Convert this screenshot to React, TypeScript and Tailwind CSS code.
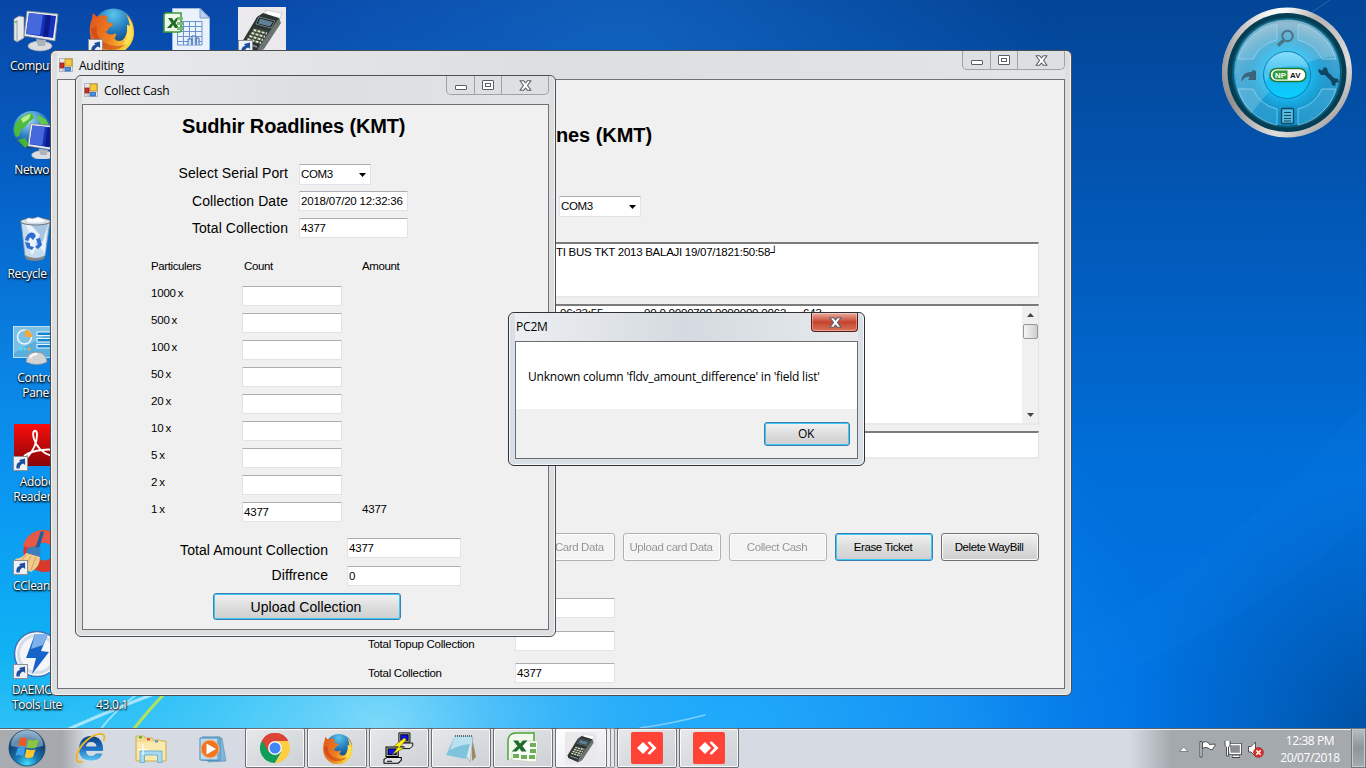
import React from "react";

const UI = "font-['Liberation_Sans',Arial,sans-serif] text-[11.5px] leading-[13px] tracking-[-0.4px] text-black whitespace-pre block";
const UI_WIDE = "font-['Liberation_Sans',Arial,sans-serif] text-[11.5px] leading-[13px] tracking-[-0.27px] text-black whitespace-pre block";
const NUM = "font-['Liberation_Sans',Arial,sans-serif] text-[11.5px] leading-[13px] tracking-[-0.2px] text-black whitespace-pre block";
const BIG = "font-['Liberation_Sans',Arial,sans-serif] text-[14px] leading-[16px] tracking-[0.07px] text-black whitespace-pre block";
const SEGOE = "font-['Open_Sans','Noto_Sans',sans-serif] whitespace-pre";

/* ---------- wallpaper ---------- */
function Wallpaper() {
  return (
    <svg className="absolute inset-0" width="1366" height="768" viewBox="0 0 1366 768">
      <defs>
        <linearGradient id="wBase" x1="0" y1="0" x2="0" y2="1">
          <stop offset="0" stopColor="#0846a6" />
          <stop offset="0.25" stopColor="#0562c8" />
          <stop offset="0.5" stopColor="#0a86e6" />
          <stop offset="0.65" stopColor="#0a98f2" />
          <stop offset="0.85" stopColor="#10b2f4" />
          <stop offset="1" stopColor="#3fc9f8" />
        </linearGradient>
        <linearGradient id="wRight" x1="0" y1="0" x2="0" y2="1">
          <stop offset="0" stopColor="#034596" />
          <stop offset="0.3" stopColor="#0259b8" />
          <stop offset="0.6" stopColor="#006ed8" />
          <stop offset="1" stopColor="#0076e6" />
        </linearGradient>
        <linearGradient id="wFade" x1="0" y1="0" x2="1" y2="0">
          <stop offset="0.3" stopColor="#fff" stopOpacity="0" />
          <stop offset="0.62" stopColor="#fff" stopOpacity="0.75" />
          <stop offset="0.78" stopColor="#fff" stopOpacity="1" />
        </linearGradient>
        <mask id="wMask"><rect width="1366" height="768" fill="url(#wFade)" /></mask>
        <radialGradient id="wGlow" gradientUnits="userSpaceOnUse" cx="380" cy="730" r="330">
          <stop offset="0" stopColor="#8fe2fb" stopOpacity="0.85" />
          <stop offset="1" stopColor="#40c8f8" stopOpacity="0" />
        </radialGradient>
        <radialGradient id="wMid" gradientUnits="userSpaceOnUse" cx="720" cy="740" r="460">
          <stop offset="0" stopColor="#22adfc" stopOpacity="0.95" />
          <stop offset="0.5" stopColor="#1a9af8" stopOpacity="0.75" />
          <stop offset="1" stopColor="#0a80f0" stopOpacity="0" />
        </radialGradient>
        <radialGradient id="wTop" gradientUnits="userSpaceOnUse" cx="620" cy="60" r="420">
          <stop offset="0" stopColor="#1670cc" stopOpacity="0.6" />
          <stop offset="1" stopColor="#1670cc" stopOpacity="0" />
        </radialGradient>
        <radialGradient id="wCorner" gradientUnits="userSpaceOnUse" cx="1390" cy="740" r="260">
          <stop offset="0" stopColor="#00458f" stopOpacity="0.85" />
          <stop offset="1" stopColor="#004fa8" stopOpacity="0" />
        </radialGradient>
      </defs>
      <rect width="1366" height="768" fill="url(#wBase)" />
      <rect width="1366" height="768" fill="url(#wRight)" mask="url(#wMask)" />
      <rect width="1366" height="768" fill="url(#wMid)" />
      <rect width="1366" height="768" fill="url(#wGlow)" />
      <rect width="1366" height="768" fill="url(#wTop)" />
      <rect width="1366" height="768" fill="url(#wCorner)" />
      <path d="M1070 640 Q1230 560 1366 400 L1366 520 Q1230 640 1070 690Z" fill="#1a8cf0" opacity="0.08" />
      <path d="M1240 60 L1330 0" stroke="#5b93cf" strokeWidth="1" opacity="0.4" />
      <g fill="none" strokeLinecap="round">
        <path d="M62 732 Q120 706 165 690" stroke="#d8f6ff" strokeWidth="3" opacity="0.7" />
        <path d="M100 730 Q115 710 140 692" stroke="#bff0ff" strokeWidth="2" opacity="0.7" />
        <path d="M133 730 Q147 712 166 692" stroke="#b4e35a" strokeWidth="3" />
        <path d="M640 728 Q670 724 705 715" stroke="#a5dcff" strokeWidth="1.5" opacity="0.7" />
      </g>
    </svg>
  );
}

/* ---------- desktop and taskbar pictures ---------- */
function Shortcut() {
  return (
    <svg className="absolute left-0 bottom-0" width="15" height="15" viewBox="0 0 15 15">
      <rect x="0.5" y="0.5" width="14" height="14" fill="#eef2f8" stroke="#8d8f92" />
      <path d="M3.5 12.5C3 8.5 4.6 6.4 7.4 5.8L6 4 12 2.6 12.2 9 10.2 7.6C7.8 8.4 6.8 9.8 6.6 12.5Z" fill="#1e4f9c" />
    </svg>
  );
}

function MonitorShape() {
  return (
    <g>
      <ellipse cx="27" cy="39" rx="12" ry="5" fill="#d9dce0" stroke="#9a9ea4" strokeWidth="0.6" />
      <path d="M23 32L33 33 32 39H25Z" fill="#aeb3ba" />
      <path d="M14 4L45 7 42 34 11 29Z" fill="#e8ebef" stroke="#7f868f" strokeWidth="0.8" />
      <path d="M16 6L43 9 40 31 13 27Z" fill="#1532b8" />
      <path d="M16 6L30 7.5 27 28 13 27Z" fill="#4668dd" />
      <path d="M33 8L38 8.5 35 30 30 29.5Z" fill="#0a1c8c" />
    </g>
  );
}

function ComputerIcon() {
  return (
    <svg width="48" height="48" viewBox="0 0 48 48">
      <path d="M1 12L6 9 11 10 11 31 4 35 1 33Z" fill="#e6e8ea" stroke="#8a8d92" strokeWidth="0.7" />
      <path d="M4 13V34" stroke="#9fa3a8" />
      <circle cx="2.8" cy="15" r="1" fill="#44d244" />
      <MonitorShape />
    </svg>
  );
}

function NetworkIcon() {
  return (
    <svg width="48" height="48" viewBox="0 0 48 48">
      <defs>
        <radialGradient id="gl" cx="0.4" cy="0.25" r="0.8">
          <stop offset="0" stopColor="#a6dcf5" /><stop offset="0.5" stopColor="#2f83c9" /><stop offset="1" stopColor="#0b3b80" />
        </radialGradient>
      </defs>
      <circle cx="19" cy="19" r="19" fill="url(#gl)" />
      <path d="M3 12Q9 3 19 2L21 7 16 11 12 16 8 19 6 25 3 26Q-1 18 3 12Z" fill="#4dbb3c" />
      <path d="M24 4Q33 6 36 14L28 13 25 9Z" fill="#63c74a" />
      <path d="M5 29L12 27 16 33 12 37Z" fill="#48b437" />
      <path d="M8 8Q12 4 18 3L16 8 10 12Z" fill="#b8f08e" />
      <g transform="translate(5 9) scale(0.9)"><MonitorShape /></g>
    </svg>
  );
}

function RecycleIcon() {
  return (
    <svg width="44" height="48" viewBox="0 0 44 48">
      <path d="M3 6L7 41Q16 46 27 41L32 6Z" fill="#c6dbee" stroke="#7f97ad" strokeWidth="0.8" />
      <path d="M7 8L13 22 9 30 14 40 20 30 27 38 29 10Z" fill="#eaf3fb" />
      <path d="M13 10L22 20 17 30 25 26 30 9Z" fill="#a9c6e0" />
      <path d="M7 40Q16 46 27 41L26 44Q16 48 8 44Z" fill="#85878a" />
      <ellipse cx="17.500" cy="6.500" rx="15" ry="3.500" fill="#d9dfe5" stroke="#65717c" strokeWidth="1" />
      <path d="M7 6L10 3 15 4 20 2 25 4 29 6 22 8 12 8Z" fill="#f8fbfe" stroke="#b9cbdb" strokeWidth="0.5" />
      <g fill="#2f6dd2">
        <path d="M8 22Q11 16 16 18L18 21 15 25 12 22 10 26 7 25Z" />
        <path d="M7 27L12 28 12 31 16 32 14 35 9 33Z" />
        <path d="M18 24L22 23 24 30 20 34 17 32 20 29Z" />
      </g>
    </svg>
  );
}

function ControlPanelIcon() {
  return (
    <svg width="48" height="42" viewBox="0 0 48 42">
      <rect x="0.500" y="1.500" width="47" height="31" fill="#5aaede" stroke="#bfe0f4" />
      <path d="M1 2H47L1 28Z" fill="#8cc8ea" opacity="0.7" />
      <circle cx="11.500" cy="12" r="7" fill="none" stroke="#e8f6ff" strokeWidth="1.600" />
      <path d="M12 4.500A8 8 0 0 1 19.500 12H12Z" fill="#f6a73c" />
      <circle cx="8" cy="24" r="1.600" fill="#49e0f5" /><circle cx="12" cy="24" r="1.600" fill="#49e0f5" /><circle cx="16" cy="24" r="1.600" fill="#f6a73c" />
      <g fill="#1783d0" stroke="#eaf7ff"><rect x="24" y="7" width="20" height="3.500" /><rect x="24" y="13.500" width="20" height="3.500" /><rect x="24" y="19.500" width="20" height="3.500" /></g>
      <path d="M13 37Q14 27 23 27 33 27 34 37 24 42 13 37Z" fill="#d2d3d5" stroke="#8e9194" strokeWidth="0.7" />
      <path d="M17 33Q19 29 24 29" stroke="#fff" strokeWidth="2" fill="none" />
    </svg>
  );
}

function AdobeIcon() {
  return (
    <svg width="48" height="48" viewBox="0 0 48 48">
      <defs><linearGradient id="ad" x1="0" y1="0" x2="0" y2="1"><stop offset="0" stopColor="#fb0d0d" /><stop offset="1" stopColor="#870606" /></linearGradient></defs>
      <rect x="1" y="1" width="46" height="42" fill="url(#ad)" />
      <path d="M13 36Q24 24 24 12Q24 7 21.500 8Q19 9 21 16Q25 29 39 33Q44 34 44 31Q43 25 29 27Q18 28 11 33" fill="none" stroke="#fff" strokeWidth="1.900" />
    </svg>
  );
}

function CCleanerIcon() {
  return (
    <svg width="48" height="46" viewBox="0 0 48 46">
      <path d="M31 1A21 21 0 1 0 47 36L36 30A9 9 0 1 1 37 16L47 10A21 21 0 0 0 31 1Z" fill="#d8392b" />
      <path d="M31 1A21 21 0 0 0 10 17L20 20A11 11 0 0 1 37 16L47 10A21 21 0 0 0 31 1Z" fill="#e65a45" />
      <path d="M29 4L24 20" stroke="#1f5fa0" strokeWidth="3.500" strokeLinecap="round" />
      <path d="M14 20Q20 15 28 20L27 28 13 24Z" fill="#3a7fbd" />
      <path d="M13 24L27 28Q27 38 18 43 5 38 2 30Q10 29 13 24Z" fill="#f0c98c" />
      <path d="M13 26L6 34M18 27L12 39M23 28L18 41" stroke="#c99450" strokeWidth="0.8" />
    </svg>
  );
}

function DaemonIcon() {
  return (
    <svg width="48" height="48" viewBox="0 0 48 48">
      <circle cx="24" cy="23" r="22.500" fill="#f4f6f9" stroke="#3d74b8" strokeWidth="1.500" />
      <circle cx="24" cy="23" r="18.500" fill="none" stroke="#d4dce6" strokeWidth="3" />
      <path d="M22 3L35 3 28 20 36 21 19 43 23 27 13 27Z" fill="#1764c8" />
      <path d="M22 3L35 3 30 14 18 18Z" fill="#7fb2ea" />
    </svg>
  );
}

function FirefoxIcon({ size, id }: { size: number; id: string }) {
  return (
    <svg width={size} height={size} viewBox="0 0 48 48">
      <defs>
        <radialGradient id={id + "b"} cx="0.5" cy="0.15" r="0.9"><stop offset="0" stopColor="#5cc5ec" /><stop offset="0.5" stopColor="#1d73b8" /><stop offset="1" stopColor="#0b2d64" /></radialGradient>
        <linearGradient id={id + "f"} x1="0" y1="0" x2="1" y2="0.5"><stop offset="0" stopColor="#e0531c" /><stop offset="0.6" stopColor="#ee7f20" /><stop offset="1" stopColor="#fbd43a" /></linearGradient>
      </defs>
      <circle cx="26" cy="22" r="20.500" fill={`url(#${id}b)`} />
      <path d="M38 6Q47 14 47 25A22.500 22.500 0 0 1 2 27Q1 19 4 12L5 6 9 10Q14 7 20 10 18 13 20 15.500L26 17Q25 20 21 21.500 21 25 18 25 21 30 28 27 30 28 27 32 29 36 35 34 41 29 40 18 42 18 43 20 42 12 38 6Z" fill={`url(#${id}f)`} />
      <path d="M40 9Q47 18 45 29 42 39 32 43 41 35 40 18 42 19 43 20 42 13 40 9Z" fill="#fde05a" />
      <path d="M3 22Q4 36 17 43 30 46 39 38 28 42 18 37 7 31 9 20Z" fill="#c63a17" opacity="0.55" />
    </svg>
  );
}

function SheetIcon() {
  return (
    <svg width="48" height="44" viewBox="0 0 48 44">
      <path d="M9.500 0.500H37L46.500 10V44H9.500Z" fill="#eaf2fc" stroke="#9bb8de" />
      <path d="M37 0.500V10H46.500Z" fill="#b9d0ee" stroke="#7f9fca" />
      <g stroke="#6a93cf" fill="none"><path d="M14 13.500H39M14 18.500H39M14 23.500H39M14 28.500H39M14 33.500H39M14.500 13V37H39V13M20.500 13V37M26.500 13V37M32.500 13V37" /></g>
      <path d="M25 37V31H29V37M29 37V28H33V37M33 37V30H36V37" stroke="#3f6fb5" fill="#cfe0f6" />
      <path d="M1 7Q1 5 4 5H18V21Q19 24 16 24H1Z" fill="#eef7ea" stroke="#3f9b3c" strokeWidth="1.600" />
      <path d="M5 10H9L11 13 13 10H16L12.500 15 16 20H12L10 17 8 20H4L8.500 15Z" fill="#1c6b26" />
      <g fill="#7cba6f"><rect x="14" y="9" width="6" height="3" /><rect x="14" y="14" width="6" height="3" /><rect x="14" y="19" width="6" height="3" /></g>
    </svg>
  );
}

function PosIcon({ size }: { size: number }) {
  return (
    <svg width={size} height={size} viewBox="0 0 48 48">
      <rect width="48" height="48" fill="#ece9ec" />
      <path d="M27 3L44 6 41 13 28 9Z" fill="#fdfdfd" stroke="#b4b8ba" strokeWidth="0.6" />
      <path d="M19 10L25 6 41 11 42 15 24 42 19 45 5 39 4 35Z" fill="#2a3431" />
      <path d="M41 11L43 16 26 42 19 46 20 41Z" fill="#6a7471" />
      <path d="M21 10L37 14 33 21 18 17Z" fill="#141a1b" stroke="#8a9595" strokeWidth="0.8" />
      <path d="M22 11.500L35 15 32 19.500 20 16.500Z" fill="#5f7f94" />
      <path d="M16 20L31 24 22 37 7 32Z" fill="#39423b" />
      <g stroke="#dbe0c6" strokeWidth="2" strokeDasharray="3 1.200"><path d="M15.500 23L29 26.500M13.500 26L27 29.800M11.500 29L25 33M9.500 32L23 36" /></g>
      <path d="M8 36L19 40" stroke="#8a9595" strokeWidth="1.500" />
    </svg>
  );
}

function AvGadget() {
  return (
    <svg className="absolute left-[1221px] top-[6px]" width="132" height="132" viewBox="0 0 132 132">
      <defs>
        <linearGradient id="avR" x1="0" y1="0" x2="1" y2="1"><stop offset="0" stopColor="#e8e4e2" /><stop offset="0.25" stopColor="#fafafa" /><stop offset="0.4" stopColor="#b6b3b2" /><stop offset="0.7" stopColor="#e0dedd" /><stop offset="1" stopColor="#7d7a79" /></linearGradient>
        <linearGradient id="avR2" x1="0" y1="0" x2="1" y2="0"><stop offset="0" stopColor="#615d5c" stopOpacity="0.6" /><stop offset="0.35" stopColor="#8e8a89" stopOpacity="0" /></linearGradient>
        <linearGradient id="avB" x1="0" y1="0" x2="0" y2="1"><stop offset="0" stopColor="#7fb0c8" /><stop offset="0.45" stopColor="#3aa2d2" /><stop offset="1" stopColor="#0a8fcb" /></linearGradient>
        <radialGradient id="avG"><stop offset="0" stopColor="#25d2ff" /><stop offset="0.55" stopColor="#18b5ee" stopOpacity="0.8" /><stop offset="1" stopColor="#0a85b3" stopOpacity="0" /></radialGradient>
        <linearGradient id="avC" x1="0" y1="0" x2="0" y2="1"><stop offset="0" stopColor="#69d8fb" /><stop offset="0.45" stopColor="#21b4ec" /><stop offset="1" stopColor="#06d0ff" /></linearGradient>
      </defs>
      <circle cx="66" cy="66.500" r="65" fill="url(#avR)" />
      <circle cx="66" cy="66.500" r="65" fill="url(#avR2)" />
      <circle cx="66" cy="66.500" r="59.500" fill="#053d52" />
      <circle cx="66" cy="66.500" r="55" fill="#0a5f7f" />
      <circle cx="66" cy="66.500" r="53" fill="url(#avB)" />
      <circle cx="66" cy="68" r="48" fill="url(#avG)" />
      <path d="M14 66A52 52 0 0 1 115 50Q70 52 30 108 15 92 14 66Z" fill="#fff" opacity="0.16" />
      <g fill="#ffffff" fillOpacity="0.09" stroke="#a6dcf2" strokeOpacity="0.65" strokeWidth="1">
        <path d="M17 53A51 51 0 0 1 56 18V34A35 35 0 0 0 32 53Z" />
        <path d="M115 53A51 51 0 0 0 77 18V34A35 35 0 0 1 101 53Z" />
        <path d="M17 83A51 51 0 0 0 56 119V103A35 35 0 0 1 32 83Z" />
        <path d="M115 83A51 51 0 0 1 77 119V103A35 35 0 0 0 101 83Z" />
      </g>
      <circle cx="66" cy="69" r="23.500" fill="url(#avC)" stroke="#0c7eb5" strokeWidth="1" />
      <path d="M43 69A23 23 0 0 1 88 62Q75 58 62 61 50 64 45 76Z" fill="#fff" opacity="0.2" />
      <g fill="none" stroke="#4a7386" strokeWidth="2"><circle cx="66.500" cy="30" r="5.200" /><path d="M62.500 34.500L57 39.500" strokeWidth="3.500" /></g>
      <path d="M20 76Q21 65 31 66L31 64 35 65V74H27L29 71Q24 70 20 76Z" fill="#3c6478" />
      <path d="M98 63L101 64.500 103 62 102 61 106 62 107 66 113 72 117 73 118 77 116 76 114 78 115 80 111 79 110 75 104 69 100 69 97 65Z" fill="#0f4763" />
      <rect x="60.500" y="102.500" width="12" height="15" rx="1" fill="#58bbdf" stroke="#0f4763" strokeWidth="1.300" />
      <path d="M63 106.500H70M63 109.500H70M63 112.500H70M63 115H70" stroke="#0f4763" strokeWidth="1.100" />
      <rect x="49" y="62.500" width="36" height="13" rx="6.500" fill="#fff" stroke="#1f7c28" strokeWidth="1.500" />
      <path d="M56 64.500H66.500V73.500H56A4.500 4.500 0 0 1 56 64.500Z" fill="#2f9a35" />
      <text x="54" y="72" fontFamily="Liberation Sans" fontWeight="700" fontSize="8" fill="#fff" textLength="11" lengthAdjust="spacingAndGlyphs">NP</text>
      <text x="69" y="72" fontFamily="Liberation Sans" fontWeight="700" fontSize="8" fill="#111" textLength="10.500" lengthAdjust="spacingAndGlyphs">AV</text>
    </svg>
  );
}

function DesktopIcon({ place, label, children, shortcut }: { place: string; label: string; children: React.ReactNode; shortcut?: boolean }) {
  return (
    <div className={`absolute flex w-[74px] flex-col items-center ${place}`}>
      <div className="relative flex h-[48px] w-[48px] flex-col items-start justify-end">
        {children}
        {shortcut && <Shortcut />}
      </div>
      <div className={`${SEGOE} mt-[3px] text-center text-[12px] leading-[15px] tracking-[-0.32px] text-white [text-shadow:0_1px_2px_#000,1px_1px_2px_#000]`}>{label}</div>
    </div>
  );
}

function Desktop() {
  return (
    <div className="absolute inset-0">
      <Wallpaper />
      <DesktopIcon place="left-0 top-[7px]" label="Computer"><ComputerIcon /></DesktopIcon>
      <DesktopIcon place="left-0 top-[111px]" label="Network"><NetworkIcon /></DesktopIcon>
      <DesktopIcon place="left-0 top-[215px]" label="Recycle Bin"><div className="ml-[5px]"><RecycleIcon /></div></DesktopIcon>
      <DesktopIcon place="left-0 top-[319px]" label={"Control\nPanel"}><ControlPanelIcon /></DesktopIcon>
      <DesktopIcon place="left-0 top-[423px]" label={"Adobe\nReader X"} shortcut><AdobeIcon /></DesktopIcon>
      <DesktopIcon place="left-0 top-[527px]" label="CCleaner" shortcut><CCleanerIcon /></DesktopIcon>
      <DesktopIcon place="left-0 top-[631px]" label={"DAEMON\nTools Lite"} shortcut><DaemonIcon /></DesktopIcon>
      <DesktopIcon place="left-[75px] top-[6px]" label="" shortcut><FirefoxIcon size={47} id="fd" /></DesktopIcon>
      <DesktopIcon place="left-[150px] top-[4px]" label=""><SheetIcon /></DesktopIcon>
      <DesktopIcon place="left-[225px] top-[7px]" label="" shortcut><PosIcon size={48} /></DesktopIcon>
      <DesktopIcon place="left-[75px] top-[646px]" label="43.0.1">{null}</DesktopIcon>
      <AvGadget />
    </div>
  );
}

/* ---------- window chrome ---------- */
function FormIcon() {
  return (
    <svg width="14" height="14" viewBox="0 0 14 14">
      <rect x="0.500" y="0.500" width="13" height="13" fill="#e6e7e9" stroke="#b5b8bc" />
      <rect x="6" y="1" width="7" height="7" fill="#f8c93c" stroke="#b98a1d" strokeWidth="0.8" />
      <rect x="1" y="5" width="4" height="5" fill="#c9302a" stroke="#8f1d18" strokeWidth="0.8" />
      <rect x="6" y="9.500" width="5.500" height="3.500" fill="#4b8fe0" stroke="#2c64b0" strokeWidth="0.8" />
      <path d="M2.500 12H5" stroke="#9aa" />
    </svg>
  );
}

function CloseGlyph() {
  return (
    <svg width="13" height="11" viewBox="0 0 13 11">
      <path d="M1 0.700H4.500L6.500 3 8.500 0.700H12L8.500 5.500 12 10.300H8.500L6.500 8 4.500 10.300H1L4.500 5.500Z" fill="#fff" stroke="#5b5d6b" strokeWidth="1.100" strokeLinejoin="round" />
    </svg>
  );
}

function Caption() {
  return (
    <div className="flex h-[19px] w-[103px] rounded-b-[5px] border-x border-b border-[#a0a2a5] bg-[#dddfe1]">
      <div className="flex w-[28px] items-center justify-center border-r border-[#a0a2a5] pt-[4px]">
        <div className="h-[5px] w-[12px] rounded-[1px] border border-[#5b5d6b] bg-white" />
      </div>
      <div className="flex w-[27px] items-center justify-center border-r border-[#a0a2a5]">
        <div className="flex h-[10px] w-[12px] items-center justify-center rounded-[1px] border border-[#5b5d6b] bg-white">
          <div className="h-[4px] w-[6px] border border-[#5b5d6b]" />
        </div>
      </div>
      <div className="flex flex-1 items-center justify-center"><CloseGlyph /></div>
    </div>
  );
}

function AppWindow({ place, title, bar, children }: { place: string; title: string; bar: string; children: React.ReactNode }) {
  return (
    <div className={`absolute flex flex-col rounded-[6px] border border-[#4c4f52] bg-[#dcdee0] px-[6px] pb-[6px] shadow-[inset_0_0_0_1px_#f2f3f4] ${place}`}>
      <div className={`flex shrink-0 items-start justify-between bg-linear-to-r from-[#e9eaec] via-[#dcdee0] to-[#e2e4e6] ${bar}`}>
        <div className="flex items-start gap-[6px] pl-[2px] pt-[7px]">
          <FormIcon />
          <span className={`${SEGOE} block text-[12px] leading-[16px] tracking-[-0.22px] text-black`}>{title}</span>
        </div>
        <Caption />
      </div>
      <div className="flex min-h-0 flex-1 flex-col border border-[#6f7174] bg-[#f0f0f0]">{children}</div>
    </div>
  );
}

/* ---------- form controls ---------- */
function Field({ value = "", size }: { value?: string; size: string }) {
  return (
    <div className={`flex shrink-0 items-center rounded-[1px] border border-[#e2e3ea] border-t-[#abadb3] bg-white pl-[1px] ${size}`}>
      <span className={NUM}>{value}</span>
    </div>
  );
}

function Combo({ size }: { size: string }) {
  return (
    <div className={`flex shrink-0 items-center justify-between rounded-[1px] border border-[#e2e3ea] border-t-[#abadb3] bg-white pl-[1px] pr-[4px] ${size}`}>
      <span className={UI}>COM3</span>
      <svg width="7" height="4" viewBox="0 0 7 4"><path d="M0 0H7L3.500 4Z" fill="#000" /></svg>
    </div>
  );
}

function PushButton({ label, size, text = UI, kind = "plain" }: { label: string; size: string; text?: string; kind?: "plain" | "focus" | "off" }) {
  const skin = {
    plain: "border-[#707070] bg-linear-to-b from-[#f2f2f2] from-0% via-[#dddddd] via-50% to-[#cfcfcf] shadow-[inset_0_0_0_1px_#fafafa]",
    focus: "border-[#3c7fb1] bg-linear-to-b from-[#f2f2f2] from-0% via-[#dddddd] via-50% to-[#cfcfcf] shadow-[inset_0_0_0_1px_#3bc8f3]",
    off: "border-[#adb2b5] bg-[#f4f4f4] shadow-[inset_0_0_0_1px_#fcfcfc]",
  }[kind];
  return (
    <button className={`flex shrink-0 items-center justify-center rounded-[3px] border pr-[2px] ${skin} ${size}`}>
      <span className={`${text} ${kind === "off" ? "opacity-40" : ""}`}>{label}</span>
    </button>
  );
}

const SUNKEN = "border-t-2 border-r border-b-2 border-t-[#7b7b7b] border-r-[#e3e3e3] border-b-[#e9e9e9] bg-white";

function AuditingWindow() {
  return (
    <AppWindow place="left-[50px] top-[50px] h-[646px] w-[1022px]" title="Auditing" bar="h-[28px]">
      <div className="flex h-[609px] flex-col pl-[310px] pr-[25px]">
        <div className="mt-[43px] w-[284px] text-right font-['Liberation_Sans',Arial,sans-serif] text-[20px] leading-[24px] font-bold tracking-[-0.06px] whitespace-nowrap">Sudhir Roadlines (KMT)</div>
        <div className="mt-[49px] pl-[191px]"><Combo size="h-[21px] w-[82px]" /></div>
        <div className={`mt-[25px] ml-[150px] h-[56px] pl-[38px] pt-[2px] ${SUNKEN}`}>
          <span className={UI_WIDE}>TI BUS TKT 2013 BALAJI 19/07/1821:50:58┘</span>
        </div>
        <div className={`mt-[6px] ml-[150px] flex h-[121px] justify-between ${SUNKEN}`}>
          <div className="flex pt-[1px] pl-[42px]">
            <span className={`${NUM} w-[84px]`}>06:33:55</span>
            <span className={`${NUM} w-[159px]`}>00.0.0000700.0000000.0063</span>
            <span className={NUM}>643</span>
          </div>
          <div className="flex w-[16px] flex-col items-center justify-between bg-[#f0f0f0] pb-[6px] pt-[7px]">
            <div className="flex flex-col items-center gap-[7px]">
              <svg width="7" height="4" viewBox="0 0 7 4"><path d="M0 4H7L3.500 0Z" fill="#444" /></svg>
              <div className="h-[15px] w-[15px] rounded-[2px] border border-[#979797] bg-linear-to-r from-[#f4f4f4] to-[#cfcfcf]" />
            </div>
            <svg width="7" height="4" viewBox="0 0 7 4"><path d="M0 0H7L3.500 4Z" fill="#444" /></svg>
          </div>
        </div>
        <div className={`mt-[6px] ml-[150px] h-[28px] ${SUNKEN}`} />
        <div className="mt-[74px] flex justify-end gap-[8px]">
          <PushButton kind="off" label="Read Card Data" size="h-[28px] w-[98px]" />
          <PushButton kind="off" label="Upload card Data" size="h-[28px] w-[98px]" />
          <PushButton kind="off" label="Collect Cash" size="h-[28px] w-[98px]" />
          <PushButton kind="focus" label="Erase Ticket" size="h-[28px] w-[98px]" />
          <PushButton label="Delete WayBill" size="h-[28px] w-[98px]" />
        </div>
        <div className="mt-[37px] flex w-[247px] justify-end"><Field size="h-[20px] w-[100px]" /></div>
        <div className="mt-[13px] flex w-[247px] justify-between">
          <span className={`${UI_WIDE} mt-[7px]`}>Total Topup Collection</span>
          <Field size="h-[20px] w-[100px]" />
        </div>
        <div className="mt-[12px] flex w-[247px] justify-between">
          <span className={`${UI_WIDE} mt-[4px]`}>Total Collection</span>
          <Field value="4377" size="h-[20px] w-[100px]" />
        </div>
      </div>
    </AppWindow>
  );
}

const NOTES = ["1000", "500", "100", "50", "20", "10", "5", "2", "1"];

function CollectCashWindow() {
  return (
    <AppWindow place="left-[75px] top-[75px] h-[562px] w-[481px]" title="Collect Cash" bar="h-[28px]">
      <div className="mt-[9px] ml-[99px] font-['Liberation_Sans',Arial,sans-serif] text-[20px] leading-[24px] font-bold tracking-[-0.15px] whitespace-nowrap">Sudhir Roadlines (KMT)</div>
      <div className="mt-[26px] flex flex-col gap-[7px]">
        <div className="flex h-[20px] items-start"><span className={`${BIG} mr-[11px] mt-[1px] w-[205px] text-right`}>Select Serial Port</span><Combo size="h-[21px] w-[72px]" /></div>
        <div className="flex items-start"><span className={`${BIG} mr-[11px] mt-[2px] w-[205px] text-right`}>Collection Date</span><Field value="2018/07/20 12:32:36" size="h-[20px] w-[109px]" /></div>
        <div className="flex items-start"><span className={`${BIG} mr-[11px] mt-[2px] w-[205px] text-right`}>Total Collection</span><Field value="4377" size="h-[20px] w-[109px]" /></div>
      </div>
      <div className="mt-[22px] flex pl-[68px]">
        <span className={`${UI} w-[93px]`}>Particulers</span>
        <span className={`${UI} w-[118px]`}>Count</span>
        <span className={UI}>Amount</span>
      </div>
      <div className="mt-[13px] flex flex-col gap-[7px] pl-[68px]">
        {NOTES.map((n) => (
          <div key={n} className="flex h-[20px] items-start">
            <span className={`${NUM} mt-[1px] flex w-[91px] gap-[2px]`}><span>{n}</span><span>x</span></span>
            <Field value={n === "1" ? "4377" : ""} size="h-[20px] w-[100px]" />
            <span className={`${NUM} mt-[1px] ml-[20px]`}>{n === "1" ? "4377" : ""}</span>
          </div>
        ))}
      </div>
      <div className="mt-[16px] flex flex-col gap-[8px]">
        <div className="flex h-[20px] items-start"><span className={`${BIG} mr-[19px] mt-[4px] w-[245px] text-right`}>Total Amount Collection</span><Field value="4377" size="h-[20px] w-[114px]" /></div>
        <div className="flex h-[20px] items-start"><span className={`${BIG} mr-[19px] mt-[1px] w-[245px] text-right`}>Diffrence</span><Field value="0" size="h-[20px] w-[114px]" /></div>
      </div>
      <div className="mt-[7px] pl-[130px]"><PushButton kind="focus" text={BIG} label="Upload Collection" size="h-[27px] w-[188px]" /></div>
    </AppWindow>
  );
}

function MessageDialog() {
  return (
    <div className="absolute left-[508px] top-[312px] flex h-[154px] w-[357px] flex-col rounded-[6px] border border-[#2f3135] bg-[#d9dfe6] px-[6px] pb-[6px] shadow-[inset_0_0_0_1px_#f6f8fa]">
      <div className="flex h-[28px] shrink-0 items-start justify-between bg-linear-to-r from-[#eceff2] via-[#d5dae0] to-[#e6eaee]">
        <span className={`${SEGOE} pl-[1px] pt-[6px] text-[12px] leading-[16px] tracking-[-0.2px] text-black`}>PC2M</span>
        <div className="flex h-[19px] w-[47px] items-center justify-center rounded-b-[4px] border-x border-b border-[#5b1c16] bg-linear-to-b from-[#e9aa9f] from-0% via-[#c4422c] via-50% to-[#d9725a] pl-[1px] shadow-[inset_0_0_0_1px_rgba(255,255,255,0.35)]"><CloseGlyph /></div>
      </div>
      <div className="flex flex-1 flex-col border border-[#6a6c70] bg-[#f0f0f0]">
        <div className="flex h-[67px] items-center bg-white pl-[12px] pt-[2px]">
          <span className={`${SEGOE} text-[12px] leading-[16px] tracking-[-0.22px] text-black`}>Unknown column 'fldv_amount_difference' in 'field list'</span>
        </div>
        <div className="flex justify-end pr-[7px] pt-[13px]">
          <PushButton kind="focus" label="OK" text={`${SEGOE} text-[12px] leading-[16px] tracking-[-0.3px]`} size="h-[24px] w-[86px]" />
        </div>
      </div>
    </div>
  );
}

/* ---------- taskbar ---------- */
function StartOrb() {
  return (
    <svg width="38" height="38" viewBox="0 0 38 38">
      <defs><radialGradient id="orb" cx="0.5" cy="0.95" r="0.9"><stop offset="0" stopColor="#3fe0fb" /><stop offset="0.35" stopColor="#1a78b4" /><stop offset="0.75" stopColor="#0f3f70" /><stop offset="1" stopColor="#5c8bb0" /></radialGradient></defs>
      <circle cx="19" cy="19" r="18" fill="url(#orb)" stroke="#173f61" strokeWidth="0.800" />
      <path d="M3 17A16 16 0 0 1 35 17Q19 21 3 17Z" fill="#cfe4f2" opacity="0.45" />
      <path d="M12 9.500Q16 7.500 19 9.500L17.300 18Q13.500 15.500 10 17.500Z" fill="#ea5a24" />
      <path d="M20.500 10.500Q24 12.500 31 10.500L28 18.500Q23 20.500 18.800 18.300Z" fill="#8cc63e" />
      <path d="M9.700 19Q13 17 17 19.500L15.300 27.500Q11 25 7.500 27Z" fill="#3aa0e8" />
      <path d="M18.500 20Q22 22 27.500 20.200L25 28Q20 30 16.800 28Z" fill="#fcc62c" />
    </svg>
  );
}

function IeIcon() {
  return (
    <svg width="32" height="32" viewBox="0 0 32 32">
      <defs><linearGradient id="ie" x1="0" y1="0" x2="0" y2="1"><stop offset="0" stopColor="#0b3f80" /><stop offset="0.5" stopColor="#1c6fc0" /><stop offset="1" stopColor="#58c4f2" /></linearGradient></defs>
      <path d="M29 19H12Q12.500 24 17.500 24 20.500 24 22 21.500H28.500Q26 29 17 28.500 5 28.500 5 17 5.500 4.500 17 4 29.500 4.500 29 19ZM12 14.500H22.500Q22 10 17.200 10 12.500 10 12 14.500Z" fill="url(#ie)" fillRule="evenodd" />
      <path d="M29.500 9Q32 3 28 2 22 1 13 8 3 17 2.500 26 2.500 31.500 9 29.500" fill="none" stroke="#efb41f" strokeWidth="1.800" />
    </svg>
  );
}

function ExplorerIcon() {
  return (
    <svg width="34" height="32" viewBox="0 0 34 32">
      <path d="M2 3H10L11 5H18L19 7H26L27 8H32V28H2Z" fill="#f5dc8e" stroke="#c9a64a" strokeWidth="0.800" />
      <path d="M3 9H31V27H3Z" fill="#fae9ac" />
      <rect x="5" y="3.500" width="3" height="1.800" fill="#2bab39" /><rect x="13" y="5.500" width="3" height="1.800" fill="#d33" /><rect x="21" y="7.500" width="3" height="1.800" fill="#3a8de0" />
      <path d="M6 18H28V29.500H23.500V22H10.500V29.500H6Z" fill="#a6daf2" stroke="#5ba7cf" strokeWidth="0.800" />
      <path d="M9 11V22M4 16.500H14" stroke="#fff" strokeWidth="1.200" opacity="0.9" />
    </svg>
  );
}

function WmpIcon() {
  return (
    <svg width="30" height="30" viewBox="0 0 30 30">
      <path d="M7 4H24L28 27 10 28Z" fill="#7fb5d8" stroke="#5a93bb" strokeWidth="0.600" />
      <path d="M4 3H22V27L4 26Z" fill="#90c4e4" stroke="#4f8cb8" />
      <path d="M2 4H20V26H2Z" fill="#b8dcf0" stroke="#4f8cb8" />
      <circle cx="12" cy="15" r="9" fill="#f07722" stroke="#fbb27a" />
      <path d="M8.500 9.500L18 15 8.500 20.500Z" fill="#fff" />
    </svg>
  );
}

function ChromeIcon() {
  return (
    <svg width="30" height="30" viewBox="0 0 30 30">
      <path d="M15 15L2 7.500A15 15 0 0 1 28 7.500Z" fill="#db4437" />
      <path d="M15 15L2 7.500A15 15 0 0 0 15 30L21.500 18.700Z" fill="#0f9d58" />
      <path d="M15 8H28.200A15 15 0 0 1 15 30L21.500 18.700Z" fill="#ffcd40" />
      <path d="M2 7.500L8.600 18.700 15 8H28.200A15 15 0 0 0 2 7.500Z" fill="#db4437" />
      <circle cx="15" cy="15" r="7" fill="#f4f4f4" /><circle cx="15" cy="15" r="5.500" fill="#4285f4" />
    </svg>
  );
}

function PuttyIcon() {
  const pc = (
    <g stroke="#000" strokeWidth="1">
      <path d="M2 1H14V11H2Z" fill="#c6c6c6" /><rect x="4" y="3" width="8" height="6" fill="#0a12f0" />
      <path d="M0 14L3 12H17V15L14 18H0Z" fill="#dedede" /><path d="M3 16H8" />
    </g>
  );
  return (
    <svg width="32" height="32" viewBox="0 0 33 33">
      <g transform="translate(14.500 0) scale(0.95)">{pc}</g><g transform="translate(1 14.500) scale(1.050 0.980)">{pc}</g>
      <path d="M22 6L11 15H16L9 24 22 16H17L24 8Z" fill="#fff200" stroke="#333" strokeWidth="0.500" />
    </svg>
  );
}

function NotepadIcon() {
  return (
    <svg width="32" height="30" viewBox="0 0 32 30">
      <path d="M27 4L31 24 27 28Z" fill="#9c8b6a" />
      <path d="M11 3L28 4 25 29 22 24Z" fill="#dfe8ec" stroke="#8fa3ad" strokeWidth="0.600" />
      <path d="M10 3L27 4 21 26 1 22Z" fill="#7fc4dc" />
      <path d="M10 3L27 4 25 11Q14 12 5 17Z" fill="#b8e2ef" />
      <path d="M10 3H28" stroke="#5f6f78" strokeWidth="2" strokeDasharray="1 1" />
    </svg>
  );
}

function ExcelIcon() {
  return (
    <svg width="32" height="32" viewBox="0 0 32 32">
      <path d="M1 28V8Q2 1 9 1H27V10" fill="#f2f8ee" stroke="#4ca43a" strokeWidth="1.500" />
      <path d="M11 9H31L29 30 5 28V20Z" fill="#fbfdf9" stroke="#b9cdb0" strokeWidth="0.600" />
      <g fill="#6fae5b"><rect x="23" y="11" width="6" height="4" /><rect x="23" y="17" width="6" height="4" /><rect x="22" y="23" width="6" height="4" /><rect x="14" y="23" width="6" height="4" /><rect x="6" y="22" width="6" height="4" /></g>
      <path d="M6 8.500H11L13 11.500 16 8.500H20.500L15.500 14 19.500 19.500H14.500L12.500 16.500 9.500 19.500H5L10.500 14Z" fill="#1d6a2a" />
    </svg>
  );
}

function AnyDeskIcon() {
  return (
    <svg width="32" height="32" viewBox="0 0 32 32">
      <rect width="32" height="32" rx="2" fill="#ff4337" />
      <path d="M6 16L12 10 18 16 12 22Z" fill="#fff" />
      <path d="M16.500 10.500L18.700 9.300 25.500 16 18.700 22.700 16.500 21.500 21.500 16Z" fill="#fff" />
    </svg>
  );
}

function Task({ children, active }: { children: React.ReactNode; active?: boolean }) {
  return (
    <div className={`flex h-[40px] shrink-0 items-center justify-center rounded-[2px] border border-[#6d7176] shadow-[inset_0_0_0_1px_rgba(255,255,255,0.85)] ${active ? "w-[52px] bg-linear-to-br from-[#ffffff] to-[#e4e6e8]" : "w-[60px] bg-linear-to-br from-[#e6e8ea] to-[#cdd1d5]"}`}>{children}</div>
  );
}

function TrayIcons() {
  return (
    <svg width="90" height="20" viewBox="0 0 90 20">
      <path d="M1.500 12.500H10L5.700 8Z" fill="#fff" stroke="#5d6064" strokeWidth="0.700" />
      <g stroke="#3f4245" strokeWidth="0.900" fill="#fff">
        <path d="M22 2.500H24V18H22Z" /><path d="M24.500 3.500Q28 1.500 31 4L31.500 5.500 37 5V6.500L34 11Q31 10 30 9 27 7.500 24.500 9.500Z" />
      </g>
      <path d="M51 5.500H62.500V14.500H52Z" fill="#8a8e92" stroke="#3f4245" strokeWidth="3" />
      <path d="M51 5.500H62.500V14.500H52Z" fill="#8a8e92" stroke="#fff" strokeWidth="1.300" />
      <path d="M54 17.500H62" stroke="#3f4245" strokeWidth="3" /><path d="M54.500 17.300H61.500" stroke="#fff" strokeWidth="1.400" />
      <path d="M47 2V6Q47 7.500 48.500 8V17H50.500V8Q52 7.500 52 6V2" fill="#fff" stroke="#3f4245" strokeWidth="0.900" />
      <path d="M70.500 7.500H73L77.500 3V17.500L73 13H70.500Z" fill="#fff" stroke="#3f4245" strokeWidth="0.900" />
      <circle cx="80.500" cy="13.500" r="5" fill="#d92f2a" stroke="#8f1d18" strokeWidth="0.500" />
      <path d="M78.300 11.300L82.700 15.700M82.700 11.300L78.300 15.700" stroke="#fff" strokeWidth="1.500" />
    </svg>
  );
}

function Taskbar() {
  return (
    <div className="absolute left-0 top-[728px] flex h-[40px] w-[1366px] items-stretch bg-[linear-gradient(90deg,#a8acb0_0px,#a5a8ac_62px,#d6dae2_86px,#d6dae2_1130px,#a4a9ae_1172px,#a4a9ae_1366px)] shadow-[inset_0_1px_0_#5d6166,inset_0_2px_0_#eef1f5]">
      <div className="flex w-[245px] shrink-0 items-center">
        <div className="ml-[8px]"><StartOrb /></div>
        <div className="ml-[28px]"><IeIcon /></div>
        <div className="ml-[28px] pt-[2px]"><ExplorerIcon /></div>
        <div className="ml-[30px] pt-[1px]"><WmpIcon /></div>
      </div>
      <div className="flex gap-[2px]">
        <Task><ChromeIcon /></Task>
        <Task><FirefoxIcon size={31} id="ft" /></Task>
        <Task><PuttyIcon /></Task>
        <Task><NotepadIcon /></Task>
        <Task><ExcelIcon /></Task>
        <div className="flex w-[60px]">
          <Task active><PosIcon size={32} /></Task>
          <div className="w-[4px] rounded-r-[2px] border-y border-r border-[#85898d] bg-[#eceef0]" />
          <div className="w-[4px] rounded-r-[2px] border-y border-r border-[#8f9397] bg-[#e2e5e8]" />
        </div>
        <Task><AnyDeskIcon /></Task>
        <Task><AnyDeskIcon /></Task>
      </div>
      <div className="ml-auto flex items-center">
        <div className="pt-[1px]"><TrayIcons /></div>
        <div className={`${SEGOE} mr-[11px] ml-[12px] w-[60px] pt-[2px] text-center text-[12px] leading-[17px] tracking-[-0.42px] text-white`}>
          <div>12:38 PM</div>
          <div>20/07/2018</div>
        </div>
        <div className="h-[40px] w-[15px] border border-[#74787c] bg-linear-to-b from-[#b9bdc1] via-[#8f9498] to-[#a6abaf] shadow-[inset_0_0_0_1px_#c6cacd]" />
      </div>
    </div>
  );
}

export default function App() {
  return (
    <div className="relative h-[768px] w-[1366px] overflow-hidden bg-[#0562c8] select-none">
      <Desktop />
      <AuditingWindow />
      <CollectCashWindow />
      <MessageDialog />
      <Taskbar />
    </div>
  );
}
